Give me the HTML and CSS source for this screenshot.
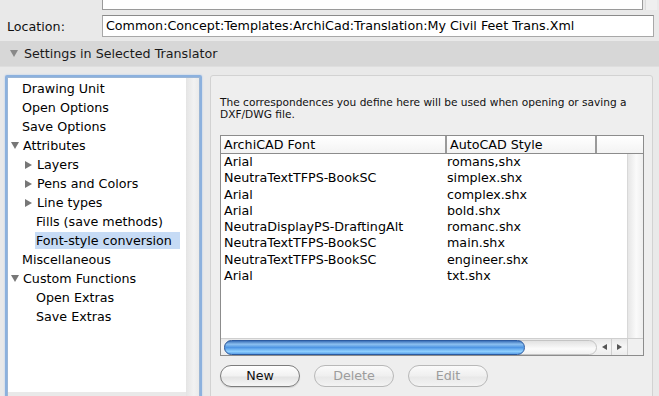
FILE: index.html
```html
<!DOCTYPE html>
<html>
<head>
<meta charset="utf-8">
<link rel="stylesheet" href="styles.css">
</head>
<body>
<div class="top-row">
  <div class="top-field"></div>
  <div class="top-side"></div>
</div>
<div class="location-row">
  <span class="loc-label">Location:</span>
  <div class="loc-field">Common:Concept:Templates:ArchiCad:Translation:My Civil Feet Trans.Xml</div>
</div>
<div class="section-header">
  <span class="tri-down tri-header"></span>
  <span>Settings in Selected Translator</span>
</div>
<div class="main">
  <div class="tree-ring">
    <div class="tree">
      <div class="tree-list">
        <div class="item l0">Drawing Unit</div>
        <div class="item l0">Open Options</div>
        <div class="item l0">Save Options</div>
        <div class="item l0 parent"><span class="tri-down"></span>Attributes</div>
        <div class="item l1 parent"><span class="tri-right"></span>Layers</div>
        <div class="item l1 parent"><span class="tri-right"></span>Pens and Colors</div>
        <div class="item l1 parent"><span class="tri-right"></span>Line types</div>
        <div class="item l1">Fills (save methods)</div>
        <div class="item l1"><span class="sel">Font-style conversion</span></div>
        <div class="item l0">Miscellaneous</div>
        <div class="item l0 parent"><span class="tri-down"></span>Custom Functions</div>
        <div class="item l1">Open Extras</div>
        <div class="item l1">Save Extras</div>
      </div>
      <div class="tree-scroll"></div>
    </div>
  </div>
  <div class="panel">
    <p class="desc">The correspondences you define here will be used when opening or saving a DXF/DWG file.</p>
    <div class="table">
      <div class="thead">
        <div class="th c1">ArchiCAD Font</div>
        <div class="th c2">AutoCAD Style</div>
        <div class="th c3"></div>
      </div>
      <div class="tbody">
        <div class="rows">
          <div class="row"><span class="c1">Arial</span><span class="c2">romans,shx</span></div>
          <div class="row"><span class="c1">NeutraTextTFPS-BookSC</span><span class="c2">simplex.shx</span></div>
          <div class="row"><span class="c1">Arial</span><span class="c2">complex.shx</span></div>
          <div class="row"><span class="c1">Arial</span><span class="c2">bold.shx</span></div>
          <div class="row"><span class="c1">NeutraDisplayPS-DraftingAlt</span><span class="c2">romanc.shx</span></div>
          <div class="row"><span class="c1">NeutraTextTFPS-BookSC</span><span class="c2">main.shx</span></div>
          <div class="row"><span class="c1">NeutraTextTFPS-BookSC</span><span class="c2">engineer.shx</span></div>
          <div class="row"><span class="c1">Arial</span><span class="c2">txt.shx</span></div>
        </div>
        <div class="vscroll"></div>
      </div>
      <div class="hscroll">
        <div class="htrack"><div class="hthumb"></div></div>
        <div class="harrows">
          <span class="arr-l"></span><span class="arr-r"></span>
        </div>
        <div class="corner"></div>
      </div>
    </div>
    <div class="buttons">
      <div class="btn">New</div>
      <div class="btn disabled">Delete</div>
      <div class="btn disabled">Edit</div>
    </div>
  </div>
</div>
</body>
</html>
```
FILE: styles.css
```css
* { box-sizing: border-box; }
html, body { margin: 0; padding: 0; }
body {
  width: 659px;
  height: 396px;
  overflow: hidden;
  background: #e9e9e9;
  font-family: "DejaVu Sans", sans-serif;
  font-size: 12.7px;
  color: #000;
}
.top-row {
  display: flex;
  height: 10px;
}
.top-field {
  margin-left: 102px;
  width: 541px;
  height: 10px;
  background: #fff;
  border: 1px solid #9a9a9a;
  border-top: none;
}
.top-side {
  margin-left: 2px;
  width: 12px;
  background: #efefef;
  border-left: 1px solid #dcdcdc;
}
.location-row {
  display: flex;
  align-items: center;
  height: 31px;
  padding-top: 1px;
}
.loc-label {
  width: 102px;
  padding-left: 7px;
  color: #111;
}
.loc-field {
  width: 552px;
  height: 22px;
  background: #fff;
  border: 1px solid #a8a8a8;
  border-top-color: #8a8a8a;
  padding: 2px 0 0 3px;
  white-space: nowrap;
}
.section-header {
  display: flex;
  align-items: center;
  height: 26px;
  background: #d7d7d7;
  padding-left: 10px;
  color: #1a1a1a;
  border-bottom: 1px solid #dedede;
}
.tri-down {
  display: inline-block;
  width: 0;
  height: 0;
  border-left: 4px solid transparent;
  border-right: 4px solid transparent;
  border-top: 7px solid #777;
  margin-right: 4px;
}
.tri-header {
  border-top-color: #888;
  margin-right: 6px;
}
.tri-right {
  display: inline-block;
  width: 0;
  height: 0;
  border-top: 4px solid transparent;
  border-bottom: 4px solid transparent;
  border-left: 7px solid #777;
  margin-right: 5px;
}
.main {
  display: flex;
  align-items: flex-start;
  padding-top: 8px;
}
.tree-ring {
  margin-left: 5px;
  width: 197px;
  height: 330px;
  border: 2px solid #8cb1de;
  border-radius: 2px;
  box-shadow: 0 0 2px #a9c6ea;
}
.tree {
  display: flex;
  height: 100%;
  border: 1px solid #9bb6d6;
}
.tree-list {
  width: 178px;
  background: #fff;
  padding-top: 1px;
  height: 314px;
}
.tree-scroll {
  flex: 1;
  background: linear-gradient(to right, #e4e4e4, #f2f2f2 60%, #eaeaea);
}
.item {
  height: 19px;
  line-height: 19px;
  white-space: nowrap;
  display: flex;
  align-items: center;
}
.item.l0 { padding-left: 14px; }
.item.l1 { padding-left: 28px; }
.item.l0.parent { padding-left: 3px; }
.item.l1.parent { padding-left: 17px; }
.sel {
  background: #c6dbf5;
  width: 145px;
  height: 17px;
  line-height: 17px;
  margin-left: -1px;
  padding-left: 1px;
}
.panel {
  margin-left: 8px;
  width: 443px;
  height: 330px;
  background: #eeeeee;
  border: 1px solid #d2d2d2;
  border-radius: 3px;
  padding: 20px 0 0 9px;
}
.desc {
  margin: 0;
  font-size: 10.6px;
  line-height: 12px;
  color: #111;
  width: 425px;
}
.table {
  margin-top: 15px;
  width: 424px;
  height: 221px;
  border: 1px solid #8c8c8c;
  background: #fff;
  display: flex;
  flex-direction: column;
}
.thead {
  display: flex;
  height: 18px;
  border-bottom: 1px solid #8c8c8c;
  background: linear-gradient(#ffffff, #f3f3f3);
}
.th {
  line-height: 17px;
  padding-left: 3px;
  border-right: 2px solid #9a9a9a;
  white-space: nowrap;
}
.th.c1 { width: 226px; }
.th.c2 { width: 150px; }
.th.c3 { flex: 1; border-right: none; }
.tbody {
  display: flex;
  flex: 1;
}
.rows {
  width: 406px;
}
.row {
  display: flex;
  height: 16.3px;
  line-height: 16.3px;
  white-space: nowrap;
}
.row .c1 { width: 222px; padding-left: 3px; }
.row .c2 { padding-left: 4px; }
.vscroll {
  flex: 1;
  background: linear-gradient(to right, #e6e6e6, #fafafa 55%, #eeeeee);
  border-left: 1px solid #d8d8d8;
}
.hscroll {
  display: flex;
  height: 17px;
  background: linear-gradient(#e8e8e8, #f7f7f7 50%, #ececec);
  border-top: 1px solid #cfcfcf;
  align-items: center;
}
.htrack {
  margin-left: 3px;
  width: 373px;
  height: 15px;
  background: linear-gradient(#e2e2e2, #fbfbfb 60%, #f0f0f0);
  border-radius: 8px;
  border: 1px solid #c4c4c4;
  display: flex;
  align-items: center;
}
.hthumb {
  width: 301px;
  height: 15px;
  margin-left: -1px;
  border-radius: 8px;
  background: linear-gradient(#3a6fb8, #8cc0f0 25%, #4f96e4 50%, #8fd0ff 80%, #5aa0e8);
  border: 1px solid #2b5aa0;
}
.harrows {
  display: flex;
  align-items: center;
  width: 29px;
  height: 16px;
  margin-left: 1px;
}
.arr-l, .arr-r {
  width: 14px;
  height: 16px;
  display: flex;
  align-items: center;
  justify-content: center;
}
.arr-l::before {
  content: "";
  border-top: 3px solid transparent;
  border-bottom: 3px solid transparent;
  border-right: 5px solid #555;
}
.arr-r::before {
  content: "";
  border-top: 3px solid transparent;
  border-bottom: 3px solid transparent;
  border-left: 5px solid #555;
}
.arr-l { border-right: 1px solid #cfcfcf; }
.corner {
  flex: 1;
  height: 16px;
  background: #f0f0f0;
  border-left: 1px solid #d0d0d0;
}
.buttons {
  display: flex;
  gap: 14px;
  margin-top: 9px;
}
.btn {
  width: 80px;
  height: 22px;
  border-radius: 11px;
  border: 1px solid #7c7c7c;
  background: linear-gradient(#ffffff, #f1f1f1 50%, #e3e3e3 55%, #f6f6f6);
  text-align: center;
  line-height: 20px;
  color: #111;
  box-shadow: 0 1px 1px rgba(0,0,0,0.12);
}
.btn.disabled {
  border-color: #b8b8b8;
  color: #9c9c9c;
  background: linear-gradient(#fafafa, #efefef 50%, #e8e8e8 55%, #f3f3f3);
  box-shadow: none;
}
```
